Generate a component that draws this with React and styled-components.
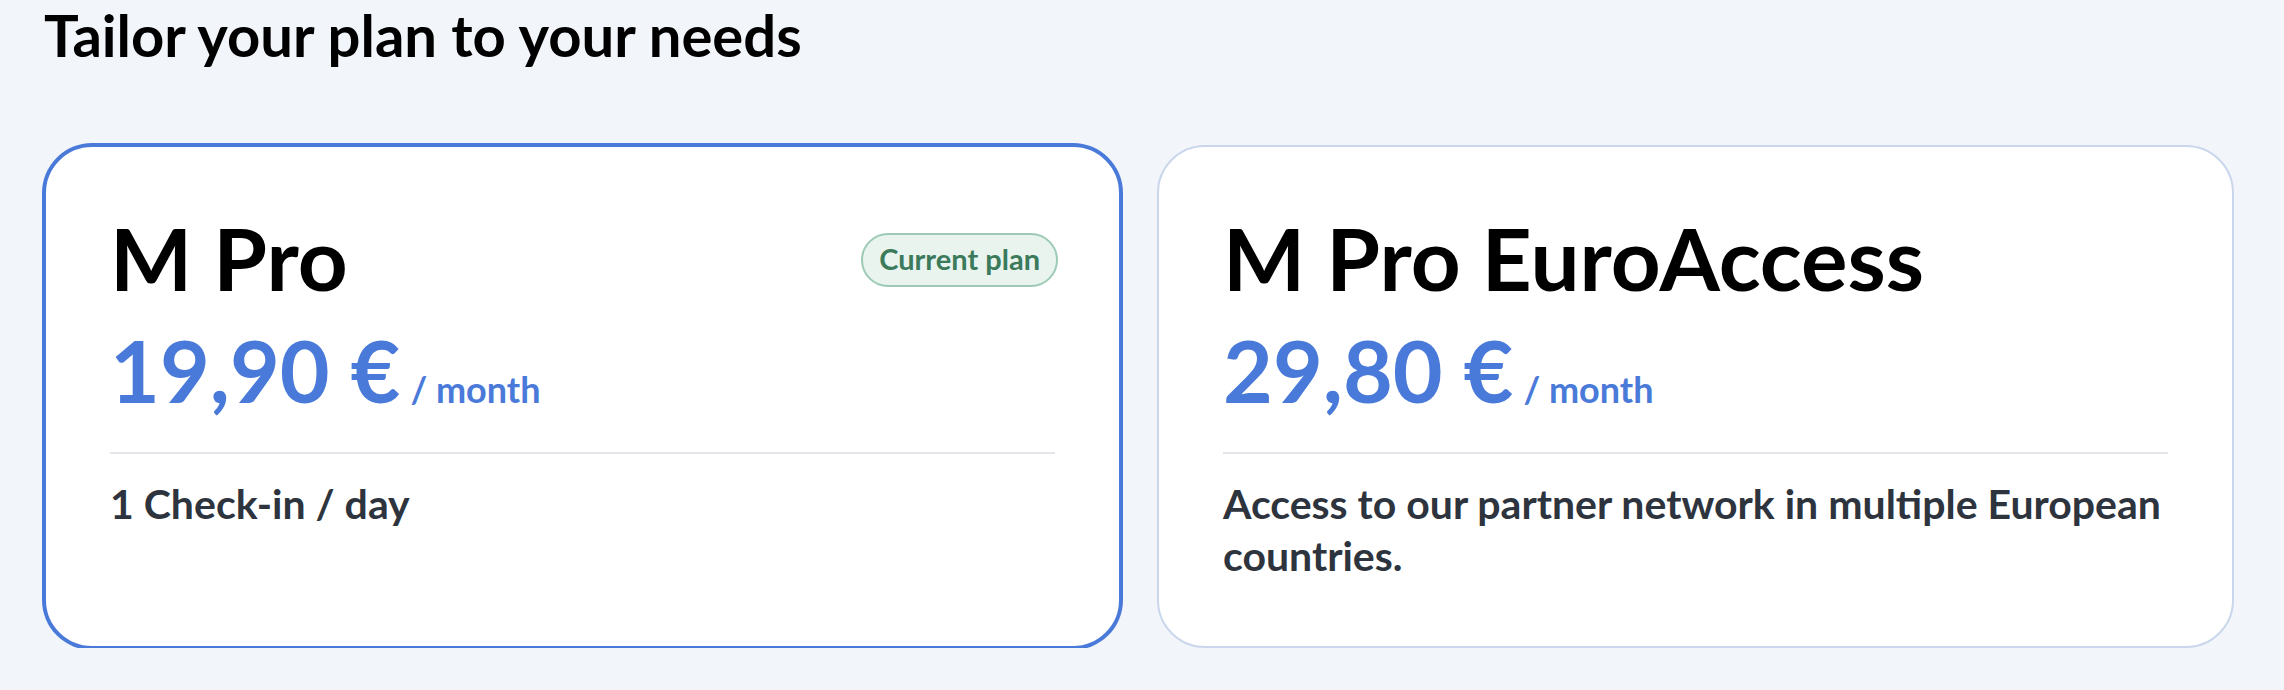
import React from 'react'
import styled, { createGlobalStyle } from 'styled-components'

const GlobalStyle = createGlobalStyle`
    html, body {
        margin: 0;
        padding: 0;
        background: #f2f5fa;
        font-family: Lato, 'Liberation Sans', sans-serif;
    }
`

const Page = styled.main`
    padding: 0 50px 0 44px;
`

const Heading = styled.h1`
    margin: 0 0 75px 0;
    font-size: 58px;
    line-height: 1.2;
    font-weight: 700;
    color: #000;
`

const PlanGrid = styled.div`
    display: grid;
    grid-template-columns: 1fr 1fr;
    gap: 36px;
`

const Card = styled.section`
    background: #fff;
    border: 2px solid ${ props => props.selected ? '#4a7ad9' : '#c9d6eb' };
    box-shadow: ${ props => props.selected ? '0 0 0 2px #4a7ad9' : 'none' };
    border-radius: 48px;
    padding: 59px 64px 64px;
`

const TitleRow = styled.div`
    display: flex;
    justify-content: space-between;
    align-items: center;
`

const PlanName = styled.h2`
    margin: 0;
    font-size: 87px;
    line-height: 1.2;
    font-weight: 700;
    color: #000;
`

const Badge = styled.span`
    display: inline-block;
    margin: 5px -3px 0 0;
    padding: 7px 16px 8px;
    border: 2px solid #9ccab5;
    border-radius: 999px;
    background: #e9f4ef;
    color: #3b7a5b;
    font-size: 29px;
    line-height: 1.2;
    font-weight: 700;
`

const PriceRow = styled.div`
    display: flex;
    align-items: baseline;
    gap: 10px;
    margin-top: 8px;
    color: #4a7ad9;
`

const Amount = styled.span`
    font-size: 86px;
    line-height: 1.2;
    font-weight: 700;
`

const Period = styled.span`
    font-size: 36px;
    font-weight: 700;
`

const Divider = styled.hr`
    margin: 31px 0 24px;
    border: none;
    height: 2px;
    background: #e4e6ec;
`

const Description = styled.p`
    margin: 0;
    font-size: 41px;
    line-height: 52px;
    font-weight: 700;
    color: #2e343e;
`

const plans = [
    {
        name: 'M Pro',
        price: '19,90 €',
        text: '1 Check-in / day',
        current: true,
    },
    {
        name: 'M Pro EuroAccess',
        price: '29,80 €',
        text: 'Access to our partner network in multiple European countries.',
        current: false,
    },
]

const App = () => {
    return (
        <Page>
            <GlobalStyle />
            <Heading>Tailor your plan to your needs</Heading>
            <PlanGrid>
                {
                    plans.map(plan => (
                        <Card key={ plan.name } selected={ plan.current }>
                            <TitleRow>
                                <PlanName>{ plan.name }</PlanName>
                                { plan.current && <Badge>Current plan</Badge> }
                            </TitleRow>
                            <PriceRow>
                                <Amount>{ plan.price }</Amount>
                                <Period>/ month</Period>
                            </PriceRow>
                            <Divider />
                            <Description>{ plan.text }</Description>
                        </Card>
                    ))
                }
            </PlanGrid>
        </Page>
    )
}

export default App
